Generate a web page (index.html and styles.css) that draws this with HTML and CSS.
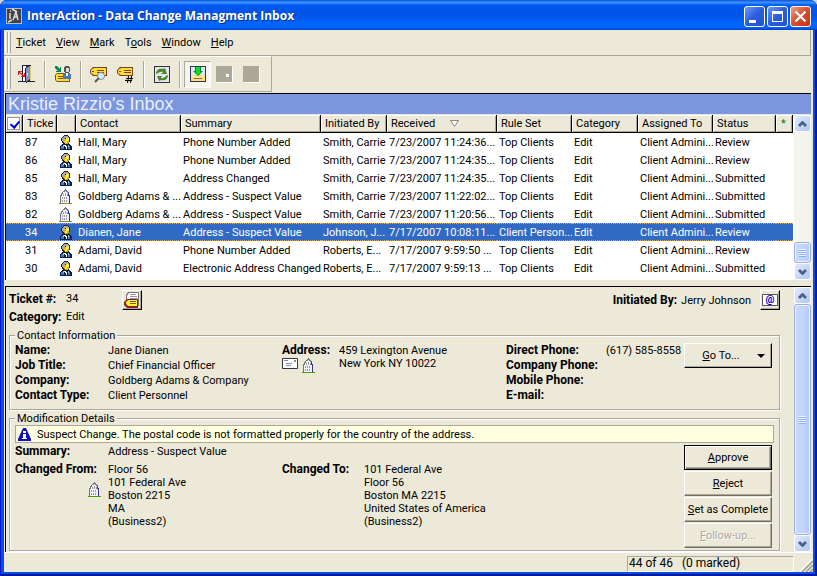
FILE: index.html
```
<!DOCTYPE html>
<html lang="en">
<head>
    <meta charset="UTF-8">
    <title>InterAction - Data Change Managment Inbox</title>
    <link rel="stylesheet" href="styles.css">
</head>
<body>

<!-- Shared icons -->
<svg class="sprites" width="0" height="0" aria-hidden="true">
    <symbol id="person" viewBox="0 0 13 15">
        <path fill="#222" d="M5 0h4v1h1v1h1v5h-1v2h-1v1H5V9H4V8H3V6H2V3h1V2h1V1h1z"/>
        <path fill="#aaa" d="M5 1h4v1h1v1H6v1H5v3H4V6H3V3h1V2h1z"/>
        <path fill="#d8b020" d="M5 4h5v4H9v1H6V8H5z"/>
        <path fill="#ffee40" d="M7 3h3v3H8v2H6V6h1z"/>
        <path fill="#0c2050" d="M3 9h2v1h4V9h2v1h1v1h1v4H1v-4h1v-1h1z"/>
        <path fill="#3c78b0" d="M2 11h3v3H2zM9 11h2v3H9z"/>
        <path fill="#8fd0d8" d="M4 10h1v2H4zM9 10h1v2H9z"/>
        <path fill="#fff" d="M5 10h2v1h1v3H7v-2H6v-1H5z"/>
    </symbol>
    <symbol id="building" viewBox="0 0 13 15">
        <path fill="#77757c" d="M6 0h1v1h1v1h1v1h1v3h1v8H1V6h1V4h1V3h1V2h1V1h1z"/>
        <path fill="#f4f4f8" d="M6 2h1v1h1v1h1v3h1v7H2V7h1V5h1V3h2z"/>
        <path fill="#9a9aae" d="M4 5h1v2H4zM6 4h1v3H6zM8 5h1v2H8zM3 8h1v2H3zM5 8h1v2H5zM7 8h1v2H7zM3 11h1v2H3zM5 11h1v2H5zM7 11h1v2H7z"/>
        <path fill="#34348a" d="M9 4h1v2h1v8h-1V7H9z"/>
        <path d="M0 14h13v1H0z"/>
    </symbol>
    <symbol id="up" viewBox="0 0 9 6"><path d="M0 4 4 0h1l4 4-2 2-2.500-2.500L2 6z" fill="#4d6185"/></symbol>
    <symbol id="down" viewBox="0 0 9 6"><path d="M0 2l2-2 2.500 2.500L7 0l2 2-4 4H4z" fill="#4d6185"/></symbol>
</svg>

<div class="window">
    <header class="titlebar">
        <svg class="app-icon" width="16" height="16" viewBox="0 0 16 16">
            <path fill="#bbb" d="M0 0h16v16H0z"/><path fill="#444" d="M1 1h14v14H1z"/>
            <path fill="none" stroke="#ddd" stroke-width="1.500" d="M4 5v6M7 12l3-8 2 8M8 9h4M4 3h1M6 1l5 3M2 14l4-2"/>
        </svg>
        <h1>InterAction - Data Change Managment Inbox</h1>
        <div class="window-buttons">
            <button class="win-btn" aria-label="Minimize"><svg width="19" height="19"><path fill="#fff" d="M4 13h7v3H4z"/></svg></button>
            <button class="win-btn" aria-label="Maximize"><svg width="19" height="19"><path fill="none" stroke="#fff" d="M4.500 5v9.500h10V5"/><path fill="#fff" d="M4 4h11v3H4z"/></svg></button>
            <button class="win-btn close" aria-label="Close"><svg width="19" height="19"><path stroke="#fff" stroke-width="2.400" d="M4.500 4.500l10 10M14.500 4.500l-10 10"/></svg></button>
        </div>
    </header>

    <div class="client">
        <nav class="menubar">
            <span class="grip"></span>
            <a href="#"><u>T</u>icket</a>
            <a href="#"><u>V</u>iew</a>
            <a href="#"><u>M</u>ark</a>
            <a href="#">T<u>o</u>ols</a>
            <a href="#"><u>W</u>indow</a>
            <a href="#"><u>H</u>elp</a>
        </nav>

        <div class="toolbar">
            <span class="grip"></span>
            <button class="tool" aria-label="Exit">
                <svg width="17" height="18" viewBox="0 0 17 18">
                    <path fill="#223" d="M4 0h9v16h4v1H9v1H8v-1H0v-1h4z"/><path fill="#fff" d="M5 1h3v15H5z"/>
                    <path fill="#8890c8" d="M8 3l4-2v13l-4 3z"/><path fill="#223" d="M7 3h1v14H7z"/><path fill="#ff0" d="M9 8h1v3H9z"/><path fill="#d8d060" d="M12 1h1v15h-1z"/>
                    <path fill="#d22" d="M0 6h4v1H2l4 3V8h1v4H3v-1h2L1 8v2H0z"/>
                </svg>
            </button>
            <span class="sep"></span>
            <button class="tool" aria-label="Assign">
                <svg width="16" height="17" viewBox="0 0 16 17">
                    <path fill="#752" d="M2 7h8v3h5v6H2l-2-2V9z"/><path fill="#fd3" d="M2 8h7v3h5v4H2l-1-1V9z"/>
                    <path fill="#752" d="M3 10h5v1H3zM3 12h6v1H3z"/>
                    <path fill="#555" d="M10 0h4v1h1v5h-1v1h-4V6H9V1h1z"/><path fill="#ddc" d="M11 2h3v4h-3z"/>
                    <path fill="#4a78b8" d="M9 7h6v1h1v5H8V8h1z"/><path fill="#fff" d="M11 7h2v3h-2z"/>
                    <path fill="#084" d="M0 0h2l3 3V1h1v5H1V5h2L0 2z"/>
                </svg>
            </button>
            <span class="sep"></span>
            <button class="tool" aria-label="Find ticket">
                <svg width="17" height="17" viewBox="0 0 17 17">
                    <path fill="#742" d="M3 1h14v9H3L0 7V4z"/><path fill="#fd3" d="M4 2h12v7H4L1 7V4z"/><path fill="#742" d="M7 4h7v1H7zM7 6h7v1H7zM2 5h2v1H2z"/>
                    <circle cx="11" cy="10" r="3.500" fill="#d8eefa" stroke="#889"/><path stroke="#556" stroke-width="2" d="M9 12l-4 4"/>
                </svg>
            </button>
            <button class="tool" aria-label="Ticket number">
                <svg width="17" height="17" viewBox="0 0 17 17">
                    <path fill="#742" d="M3 1h13v9H3L0 7V4z"/><path fill="#fd3" d="M4 2h11v7H4L1 7V4z"/><path fill="#742" d="M7 4h7v1H7zM7 6h7v1H7zM2 5h2v1H2z"/>
                    <path stroke="#000" d="M11.500 10l-1 7M14.500 10l-1 7M9 12.500h7M8 14.500h7"/>
                </svg>
            </button>
            <span class="sep"></span>
            <button class="tool" aria-label="Refresh">
                <svg width="16" height="17" viewBox="0 0 16 17">
                    <path fill="#333" d="M0 0h16v17H0z"/><path fill="#e4e4f4" d="M1 1h14v15H1z"/>
                    <path fill="#4a8a20" d="M2 8c0-4 3-6 7-5l2-1 2 6-6 0 2-2c-3-1-4 1-7 2zM14 9c0 4-3 6-7 5l-2 1-2-5h5l-1 2c3 1 4-2 7-3z"/>
                </svg>
            </button>
            <span class="sep"></span>
            <button class="tool pressed" aria-label="Show details">
                <svg width="16" height="16" viewBox="0 0 16 16">
                    <path fill="#335" d="M0 0h16v16H0z"/><path fill="#dde8f8" d="M1 1h14v8H1z"/><path fill="#fd7" d="M1 9h14v6H1z"/>
                    <path fill="#fff4c0" d="M2 10h3v2h6v-2h3v1H2z"/><path fill="#865" d="M4 12h8v1H4z"/>
                    <path fill="#083" d="M5 1h6v4h2L8 10 3 5h2z"/><path fill="#1d2" d="M6 1h4v5h1L8 9 5 6h1z"/>
                </svg>
            </button>
            <button class="tool" disabled aria-label="Previous"><svg width="17" height="17"><path fill="#aca899" d="M0 0h16v16H0z"/><path fill="#fff" d="M16 1h1v16H1v-1h15zM10 8h3v3h-3z"/></svg></button>
            <button class="tool" disabled aria-label="Next"><svg width="17" height="17"><path fill="#aca899" d="M0 0h16v16H0z"/><path fill="#fff" d="M16 1h1v16H1v-1h15z"/></svg></button>
        </div>

        <!-- Ticket list -->
        <section class="inbox">
            <h2>Kristie Rizzio's Inbox</h2>
            <div class="pane">
                <div class="list">
                    <table>
                        <colgroup>
                            <col class="c-check"><col class="c-ticket"><col class="c-icon"><col class="c-contact">
                            <col class="c-summary"><col class="c-person"><col class="c-received"><col class="c-wide">
                            <col class="c-person"><col class="c-wide"><col class="c-status"><col class="c-check">
                        </colgroup>
                        <thead>
                            <tr>
                                <th class="check"><input type="checkbox" checked aria-label="Mark all"></th>
                                <th>Ticke</th><th></th><th>Contact</th><th>Summary</th><th>Initiated By</th>
                                <th>Received <svg class="sort" width="9" height="7"><path fill="#fff" stroke="#8a8778" d="M.500.500h8l-4 6z"/></svg></th>
                                <th>Rule Set</th><th>Category</th><th>Assigned To</th><th>Status</th><th class="star">*</th>
                            </tr>
                        </thead>
                        <tbody>
                            <tr><td></td><td>87</td><td><svg class="icon"><use href="#person"/></svg></td><td>Hall, Mary</td><td>Phone Number Added</td><td>Smith, Carrie</td><td>7/23/2007 11:24:36...</td><td>Top Clients</td><td>Edit</td><td>Client Admini...</td><td>Review</td><td></td></tr>
                            <tr><td></td><td>86</td><td><svg class="icon"><use href="#person"/></svg></td><td>Hall, Mary</td><td>Phone Number Added</td><td>Smith, Carrie</td><td>7/23/2007 11:24:35...</td><td>Top Clients</td><td>Edit</td><td>Client Admini...</td><td>Review</td><td></td></tr>
                            <tr><td></td><td>85</td><td><svg class="icon"><use href="#person"/></svg></td><td>Hall, Mary</td><td>Address Changed</td><td>Smith, Carrie</td><td>7/23/2007 11:24:35...</td><td>Top Clients</td><td>Edit</td><td>Client Admini...</td><td>Submitted</td><td></td></tr>
                            <tr><td></td><td>83</td><td><svg class="icon"><use href="#building"/></svg></td><td>Goldberg Adams &amp; ...</td><td>Address - Suspect Value</td><td>Smith, Carrie</td><td>7/23/2007 11:22:02...</td><td>Top Clients</td><td>Edit</td><td>Client Admini...</td><td>Submitted</td><td></td></tr>
                            <tr><td></td><td>82</td><td><svg class="icon"><use href="#building"/></svg></td><td>Goldberg Adams &amp; ...</td><td>Address - Suspect Value</td><td>Smith, Carrie</td><td>7/23/2007 11:20:56...</td><td>Top Clients</td><td>Edit</td><td>Client Admini...</td><td>Submitted</td><td></td></tr>
                            <tr class="selected"><td></td><td>34</td><td><svg class="icon"><use href="#person"/></svg></td><td>Dianen, Jane</td><td>Address - Suspect Value</td><td>Johnson, J...</td><td>7/17/2007 10:08:11...</td><td>Client Person...</td><td>Edit</td><td>Client Admini...</td><td>Review</td><td></td></tr>
                            <tr><td></td><td>31</td><td><svg class="icon"><use href="#person"/></svg></td><td>Adami, David</td><td>Phone Number Added</td><td>Roberts, E...</td><td>7/17/2007 9:59:50 ...</td><td>Top Clients</td><td>Edit</td><td>Client Admini...</td><td>Review</td><td></td></tr>
                            <tr><td></td><td>30</td><td><svg class="icon"><use href="#person"/></svg></td><td>Adami, David</td><td>Electronic Address Changed</td><td>Roberts, E...</td><td>7/17/2007 9:59:13 ...</td><td>Top Clients</td><td>Edit</td><td>Client Admini...</td><td>Submitted</td><td></td></tr>
                        </tbody>
                    </table>
                </div>
                <div class="scrollbar">
                    <button class="arrow" aria-label="Scroll up"><svg width="9" height="6"><use href="#up"/></svg></button>
                    <div class="track end"><div class="thumb short"><i></i></div></div>
                    <button class="arrow" aria-label="Scroll down"><svg width="9" height="6"><use href="#down"/></svg></button>
                </div>
            </div>
        </section>

        <!-- Selected ticket -->
        <section class="pane details">
            <div class="form">
                <div class="ticket-head">
                    <dl>
                        <dt>Ticket #:</dt><dd>34</dd>
                        <dt>Category:</dt><dd>Edit</dd>
                    </dl>
                    <button class="small-btn" aria-label="Ticket history">
                        <svg width="17" height="17" viewBox="0 0 17 17">
                            <path fill="#777" d="M4 0h11v14H2V3z"/><path fill="#fff" d="M5 1h9v12H3V4z"/><path fill="#999" d="M6 2h6v1H6zM6 4h7v1H6zM6 6h7v1H6z"/>
                            <path fill="#822" d="M3 7h11v9H3l-3-3v-3z"/><path fill="#fe3" d="M4 8h9v6H4l-2-2v-2z"/><path fill="#663" d="M6 9h6v1H6zM6 11h6v1H6z"/>
                        </svg>
                    </button>
                    <div class="initiated">
                        <b>Initiated By:</b> <span>Jerry Johnson</span>
                        <button class="small-btn" aria-label="Send e-mail">
                            <svg width="16" height="12"><path fill="#fff" stroke="#555" d="M.500.500h15v11H.500z"/><text class="at" x="8" y="9">@</text></svg>
                        </button>
                    </div>
                </div>

                <fieldset>
                    <legend>Contact Information</legend>
                    <div class="contact">
                        <dl>
                            <dt>Name:</dt><dd>Jane Dianen</dd>
                            <dt>Job Title:</dt><dd>Chief Financial Officer</dd>
                            <dt>Company:</dt><dd>Goldberg Adams &amp; Company</dd>
                            <dt>Contact Type:</dt><dd>Client Personnel</dd>
                        </dl>
                        <div class="address">
                            <div>
                                <b>Address:</b>
                                <div class="address-icons">
                                    <svg width="16" height="11"><path fill="#fff" stroke="#334" d="M.500.500h15v10H.500z"/><path fill="#88a" d="M2 2h4v1H2zM4 5h6v1H4zM4 7h5v1H4zM12 2h2v2h-2z"/></svg>
                                    <svg class="icon green"><use href="#building"/></svg>
                                </div>
                            </div>
                            <p>459 Lexington Avenue<br>New York NY 10022</p>
                        </div>
                        <dl class="phones">
                            <dt>Direct Phone:</dt><dd>(617) 585-8558</dd>
                            <dt>Company Phone:</dt><dd></dd>
                            <dt>Mobile Phone:</dt><dd></dd>
                            <dt>E-mail:</dt><dd></dd>
                        </dl>
                        <button class="btn goto"><span><u>G</u>o To...</span><i class="caret"></i></button>
                    </div>
                </fieldset>

                <fieldset>
                    <legend>Modification Details</legend>
                    <div class="notice">
                        <svg width="13" height="13"><path fill="#11b" d="M5 0h3l5 11v2H0v-2z"/><path fill="#fff" d="M5 3h3v2H5zM5 6h3v4h1v1H4v-1h1z"/></svg>
                        Suspect Change. The postal code is not formatted properly for the country of the address.
                    </div>
                    <div class="change">
                        <div class="change-text">
                            <b>Summary:</b><p class="wide">Address - Suspect Value</p>
                            <div class="from">
                                <b>Changed From:</b>
                                <svg class="icon green"><use href="#building"/></svg>
                            </div>
                            <p>Floor 56<br>101 Federal Ave<br>Boston 2215<br>MA<br>(Business2)</p>
                            <b>Changed To:</b>
                            <p>101 Federal Ave<br>Floor 56<br>Boston MA 2215<br>United States of America<br>(Business2)</p>
                        </div>
                        <div class="actions">
                            <button class="btn default"><span><u>A</u>pprove</span></button>
                            <button class="btn"><span><u>R</u>eject</span></button>
                            <button class="btn"><span><u>S</u>et as Complete</span></button>
                            <button class="btn" disabled><span><u>F</u>ollow-up...</span></button>
                        </div>
                    </div>
                </fieldset>
            </div>
            <div class="scrollbar">
                <button class="arrow" aria-label="Scroll up"><svg width="9" height="6"><use href="#up"/></svg></button>
                <div class="track"><div class="thumb"><i></i></div></div>
                <button class="arrow" aria-label="Scroll down"><svg width="9" height="6"><use href="#down"/></svg></button>
            </div>
        </section>

        <footer class="statusbar">
            <div class="count">44 of 46 &nbsp; (0 marked)</div>
            <svg width="13" height="13"><path stroke="#fff" stroke-width="2" d="M0 13 13 0M4 13l9-9M8 13l5-5"/><path stroke="#aca899" stroke-width="2" d="M2 13 13 2M6 13l7-7M10 13l3-3"/></svg>
        </footer>
    </div>
</div>

</body>
</html>
```
FILE: styles.css
```
* {
    box-sizing: border-box;
}
body {
    margin: 0;
    background-color: #d8d4c4;
    font: 11px/13px Roboto, "Liberation Sans", sans-serif;
    color: #000;
}
h1, h2, p, dl, dd {
    margin: 0;
}
button {
    font: inherit;
    color: inherit;
    padding: 0;
    border: none;
    background: none;
    display: flex;
    align-items: center;
    justify-content: center;
}
svg {
    display: block;
    flex: none;
}
.sprites {
    position: absolute;
}

/* Window frame */
.window {
    min-height: 100vh;
    display: flex;
    flex-direction: column;
    padding: 0 4px 4px;
    border-radius: 7px 7px 0 0;
    background-color: #0a4be0;
    box-shadow: inset 1px 0 #0019cf, inset -2px -2px #001a9c;
}
.titlebar {
    height: 30px;
    margin: 0 -4px;
    padding: 2px 6px 0 6px;
    display: flex;
    align-items: center;
    border-radius: 7px 7px 0 0;
    background: linear-gradient(#0a50d8, #3a93ff 8%, #0058ee 18%, #0053e6 50%, #0066ff 80%, #0062fa 92%, #0040c8);
}
.titlebar h1 {
    flex: 1;
    margin-left: 5px;
    font: bold 12px/18px "Open Sans", "Noto Sans", sans-serif;
    color: #fff;
    text-shadow: 1px 1px #0a2f8c;
}
.window-buttons {
    display: flex;
    gap: 2px;
}
.win-btn {
    width: 21px;
    height: 21px;
    border: 1px solid #fff;
    border-radius: 3px;
    background: linear-gradient(135deg, #6f9bf5, #2a5ce0 50%, #2453d0);
}
.win-btn.close {
    background: linear-gradient(135deg, #f0a080, #dc4a28 50%, #c03818);
}
.client {
    flex: 1;
    display: flex;
    flex-direction: column;
    background-color: #ece9d8;
}

/* Menu and toolbar */
.menubar {
    height: 26px;
    display: flex;
    align-items: center;
    border-bottom: 1px solid #aca899;
    margin-right: 2px;
    border-right: 1px solid #aca899;
}
.menubar a {
    color: #000;
    text-decoration: none;
    margin-right: 10px;
}
.grip {
    align-self: stretch;
    width: 6px;
    margin: 2px 5px 2px 1px;
    background: linear-gradient(90deg, #fff 1px, #ece9d8 1px 2px, #aca899 2px 3px, #fff 3px 4px, #ece9d8 4px 5px, #aca899 5px);
}
.toolbar {
    align-self: flex-start;
    height: 36px;
    display: flex;
    align-items: center;
    padding-right: 6px;
    border-top: 1px solid #fff;
    border-right: 1px solid #aca899;
    border-bottom: 1px solid #aca899;
}
.toolbar .grip {
    margin-right: 2px;
}
.tool {
    width: 27px;
    height: 27px;
}
.tool.pressed {
    border: 1px solid;
    border-color: #aca899 #fff #fff #aca899;
    background-color: #f6f5ee;
}
.sep {
    width: 2px;
    height: 27px;
    margin: 0 3px 0 4px;
    border-left: 1px solid #aca899;
    border-right: 1px solid #fff;
}

/* Inbox list */
.inbox {
    margin: 1px 2px 0 1px;
    border-top: 1px solid #000;
    border-left: 1px solid #000;
    background-color: #fff;
}
.inbox h2 {
    height: 21px;
    padding-left: 2px;
    background-color: #7b96de;
    border-bottom: 1px solid #ece9d8;
    color: #e8eefc;
    font: 18px/20px "Liberation Sans", Arial, sans-serif;
}
.pane {
    display: flex;
}
.list {
    flex: 1;
    min-width: 0;
    padding-bottom: 3px;
    margin-right: 1px;
}
table {
    width: 100%;
    table-layout: fixed;
    border-collapse: separate;
    border-spacing: 0;
}
.c-check { width: 17px; }
.c-ticket { width: 34px; }
.c-icon { width: 19px; }
.c-contact { width: 105px; }
.c-summary { width: 140px; }
.c-person { width: 66px; }
.c-received { width: 110px; }
.c-wide { width: 75px; }
.c-status { width: 63px; }
th, td {
    height: 18px;
    padding: 0 0 0 2px;
    text-align: left;
    white-space: nowrap;
    overflow: hidden;
}
th {
    font-weight: normal;
    padding-left: 4px;
    background-color: #ece9d8;
    border-right: 1px solid #000;
    border-bottom: 1px solid #000;
    box-shadow: inset 1px 1px #fff, inset -1px -1px #aca899;
}
th.check {
    padding: 0 0 0 1px;
}
th.check input {
    appearance: none;
    display: block;
    position: relative;
    width: 13px;
    height: 13px;
    margin: 0;
    border: 1px solid #9a9a9a;
    background-color: #fff;
}
th.check input:checked::before {
    content: "";
    position: absolute;
    left: 4px;
    top: 1px;
    width: 4px;
    height: 7px;
    border: solid #0000e0;
    border-width: 0 2px 2px 0;
    transform: rotate(40deg);
}
th.star {
    color: #107010;
    padding-left: 5px;
}
.sort {
    display: inline-block;
    margin-left: 12px;
}
.icon {
    width: 13px;
    height: 15px;
    shape-rendering: crispEdges;
    fill: #a08a20;
}
.icon.green {
    fill: #4a9a10;
}
.selected td {
    color: #fff;
    background-color: #316ac5;
    border: 1px dotted #e0a850;
    border-width: 1px 0;
}

/* Scrollbars */
.scrollbar {
    width: 17px;
    display: flex;
    flex-direction: column;
    background-color: #f4f3ee;
}
.arrow {
    height: 17px;
    border: 1px solid #fff;
    border-radius: 3px;
    background: linear-gradient(135deg, #e1eafe, #aec8f7);
}
.track {
    flex: 1;
    display: flex;
    flex-direction: column;
}
.track.end {
    justify-content: flex-end;
}
.thumb {
    flex: 1;
    display: flex;
    align-items: center;
    justify-content: center;
    border: 1px solid #98b0e8;
    border-radius: 3px;
    background: linear-gradient(90deg, #c9d8fc, #c2d3fc 60%, #b3c8f6);
    box-shadow: inset 0 0 0 1px #eef3ff;
}
.thumb.short {
    flex: none;
    height: 21px;
}
.thumb i {
    width: 7px;
    height: 8px;
    background: repeating-linear-gradient(#eef4fe 0 1px, #8cb0f8 1px 2px);
}

/* Ticket details */
.details {
    flex: 1;
    margin: 6px 2px 0 1px;
    border-top: 1px solid #000;
    border-left: 1px solid #000;
}
.form {
    flex: 1;
    padding: 3px 14px 1px 3px;
}
.ticket-head {
    display: flex;
    align-items: flex-start;
    height: 39px;
}
.ticket-head dl {
    width: 113px;
    grid-template-columns: 57px 1fr;
    line-height: 18px;
}
.initiated {
    margin-left: auto;
    display: flex;
    align-items: center;
    gap: 4px;
}
.initiated .small-btn {
    margin-left: 5px;
}
b, dt {
    font-weight: bold;
    font-size: 12px;
}
dl {
    display: grid;
    grid-template-columns: 93px 1fr;
    grid-auto-rows: min-content;
    line-height: 15px;
}
.small-btn {
    width: 20px;
    height: 20px;
    border: 1px solid;
    border-color: #fff #000 #000 #fff;
    box-shadow: inset -1px -1px #aca899;
}
.at {
    font-size: 10px;
    font-weight: bold;
    fill: #0000c0;
    text-anchor: middle;
}
fieldset {
    margin: 0;
    min-width: 0;
    padding: 0 5px;
    border: 1px solid #aca899;
    box-shadow: 1px 1px #fff, inset 1px 1px #fff;
}
fieldset + fieldset {
    margin-top: 2px;
}
legend {
    padding: 0 2px;
    background-color: #ece9d8;
}
.contact {
    display: grid;
    grid-template-columns: 267fr 224fr 178px 88px;
    height: 67px;
    padding: 1px 2px 0 0;
}
.contact b {
    line-height: 15px;
}
.contact .phones {
    grid-template-columns: 100px 1fr;
}
.address {
    display: flex;
    gap: 9px;
}
.address p {
    padding-top: 1px;
}
.address-icons {
    display: flex;
    gap: 4px;
}
.btn {
    width: 88px;
    height: 25px;
    border: 1px solid;
    border-color: #fff #716f64 #716f64 #fff;
    box-shadow: inset -1px -1px #aca899;
}
.btn.default {
    border-color: #000;
    box-shadow: inset 1px 1px #fff, inset -1px -1px #716f64, inset -2px -2px #aca899;
}
.btn:disabled {
    color: #aca899;
    text-shadow: 1px 1px #fff;
}
.goto {
    border-color: #fff #000 #000 #fff;
    gap: 17px;
    padding-left: 11px;
}
.caret {
    border: 4px solid transparent;
    border-top-color: #000;
    border-bottom: none;
}
.notice {
    display: flex;
    align-items: center;
    gap: 6px;
    height: 18px;
    padding-left: 2px;
    border: 1px solid #aca899;
    background-color: #ffffe1;
}
.change {
    display: flex;
    padding: 2px 2px 2px 0;
}
.change-text {
    flex: 1;
    display: grid;
    grid-template-columns: 93px 174fr 82px 320fr;
    grid-template-rows: 18px 1fr;
}
.change-text .wide {
    grid-column: span 3;
}
.from .icon {
    margin: 6px 0 0 73px;
}
.actions {
    display: flex;
    flex-direction: column;
    gap: 1px;
}

/* Status bar */
.statusbar {
    height: 20px;
    display: flex;
    align-items: flex-end;
    justify-content: flex-end;
    gap: 6px;
    padding-top: 3px;
    border-top: 1px solid #fff;
}
.count {
    width: 167px;
    height: 16px;
    padding-left: 1px;
    border: 1px solid;
    border-color: #aca899 #fff #fff #aca899;
    font-size: 12px;
}
```
